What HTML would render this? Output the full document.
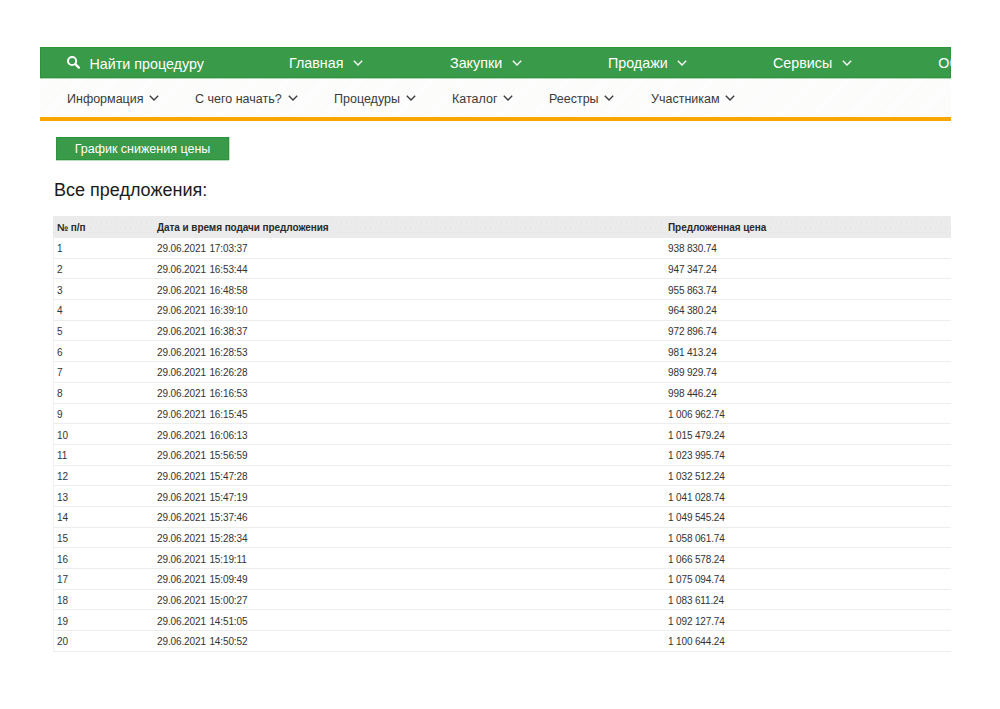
<!DOCTYPE html>
<html><head><meta charset="utf-8"><style>
html,body{margin:0;padding:0;background:#fff;}
body{width:1000px;height:709px;position:relative;overflow:hidden;font-family:"Liberation Sans",sans-serif;}
.topnav{position:absolute;left:40px;top:47px;width:911px;height:31px;background:#399a49;overflow:hidden;z-index:3;box-shadow:inset 0 0 0 1px #2d933b;color:#fff;font-size:14.3px;}
.topnav .it{position:absolute;top:0.8px;line-height:31.5px;white-space:nowrap;}
.topnav .chev{position:absolute;top:13px;}
.subnav{position:absolute;left:40px;top:78px;width:911px;height:39px;overflow:hidden;color:#3a3a3a;font-size:12.5px;
background-color:#fdfdfd;background-image:repeating-linear-gradient(135deg,#fefefe 0,#fefefe 1.6px,#fafaf8 1.6px,#fafaf8 2.75px);}
.subnav .it{position:absolute;top:1.5px;line-height:38.5px;white-space:nowrap;}
.subnav .chev{position:absolute;top:17px;}
.halo{position:absolute;left:40px;top:78px;width:911px;height:1px;background:rgba(57,154,73,0.4);z-index:3;}
.orange{position:absolute;left:40px;top:117px;width:911px;height:4px;background:#ffa500;}
.btn{position:absolute;left:56px;top:137px;width:173px;height:23px;background:#399a49;box-shadow:inset 0 0 0 1px #2d933b,0 1px 0 rgba(57,154,73,0.35),1px 0 0 rgba(57,154,73,0.3);color:#fff;font-size:12.5px;line-height:25.2px;height:23px;text-align:center;overflow:hidden;}
h1{position:absolute;left:54px;top:178.7px;margin:0;font-weight:normal;font-size:18px;line-height:22px;color:#1a1a1a;}
table{position:absolute;left:53px;top:216px;width:898px;border-collapse:collapse;font-size:10px;color:#333;}
th{background:transparent;font-weight:bold;text-align:left;height:22px;box-sizing:border-box;padding:5.5px 0 0 4px;line-height:12px;vertical-align:top;color:#2a2a2a;font-size:10px;letter-spacing:-0.07px;}
td{height:17.7px;padding:2px 0 0 4px;border-bottom:1px solid #ededed;font-size:10px;letter-spacing:-0.12px;word-spacing:0.9px;line-height:11px;vertical-align:middle;}
.hb{background:#ebebeb;padding:1px 2px;margin:0 -2px;} .c1{width:96px;} .c2{width:507px;} td.c3{word-spacing:-0.1px;}
</style></head><body>
<div class="topnav">
<svg style="position:absolute;left:22px;top:7px" width="22" height="18" viewBox="0 0 22 18"><circle cx="10.1" cy="7" r="4.1" fill="none" stroke="#fff" stroke-width="2"/><path d="M13.3 10.2 L16.9 13.6" stroke="#fff" stroke-width="2.4" stroke-linecap="round"/></svg><div class="it" style="left:49.5px;top:1.6px">Найти процедуру</div>
<div class="it" style="left:249px">Главная</div><svg class="chev" style="left:313px" viewBox="0 0 10 6" width="10" height="6"><path d="M0.8 0.8 L5 5 L9.2 0.8" fill="none" stroke="currentColor" stroke-width="1.35"/></svg>
<div class="it" style="left:410px">Закупки</div><svg class="chev" style="left:472px" viewBox="0 0 10 6" width="10" height="6"><path d="M0.8 0.8 L5 5 L9.2 0.8" fill="none" stroke="currentColor" stroke-width="1.35"/></svg>
<div class="it" style="left:568px">Продажи</div><svg class="chev" style="left:637px" viewBox="0 0 10 6" width="10" height="6"><path d="M0.8 0.8 L5 5 L9.2 0.8" fill="none" stroke="currentColor" stroke-width="1.35"/></svg>
<div class="it" style="left:733px">Сервисы</div><svg class="chev" style="left:802px" viewBox="0 0 10 6" width="10" height="6"><path d="M0.8 0.8 L5 5 L9.2 0.8" fill="none" stroke="currentColor" stroke-width="1.35"/></svg>
<div class="it" style="left:898.3px">Об ЭТП</div>
</div>
<div class="subnav">
<div class="it" style="left:27px">Информация</div><svg class="chev" style="left:109px" viewBox="0 0 10 6" width="10" height="6"><path d="M0.8 0.8 L5 5 L9.2 0.8" fill="none" stroke="currentColor" stroke-width="1.35"/></svg>
<div class="it" style="left:155px">С чего начать?</div><svg class="chev" style="left:248px" viewBox="0 0 10 6" width="10" height="6"><path d="M0.8 0.8 L5 5 L9.2 0.8" fill="none" stroke="currentColor" stroke-width="1.35"/></svg>
<div class="it" style="left:294px">Процедуры</div><svg class="chev" style="left:366px" viewBox="0 0 10 6" width="10" height="6"><path d="M0.8 0.8 L5 5 L9.2 0.8" fill="none" stroke="currentColor" stroke-width="1.35"/></svg>
<div class="it" style="left:412px">Каталог</div><svg class="chev" style="left:463px" viewBox="0 0 10 6" width="10" height="6"><path d="M0.8 0.8 L5 5 L9.2 0.8" fill="none" stroke="currentColor" stroke-width="1.35"/></svg>
<div class="it" style="left:509px">Реестры</div><svg class="chev" style="left:563.8px" viewBox="0 0 10 6" width="10" height="6"><path d="M0.8 0.8 L5 5 L9.2 0.8" fill="none" stroke="currentColor" stroke-width="1.35"/></svg>
<div class="it" style="left:611px">Участникам</div><svg class="chev" style="left:685px" viewBox="0 0 10 6" width="10" height="6"><path d="M0.8 0.8 L5 5 L9.2 0.8" fill="none" stroke="currentColor" stroke-width="1.35"/></svg>
</div>
<div class="halo"></div><div class="orange"></div>
<div style="position:absolute;left:53px;top:238px;width:1px;height:414px;background:#f2f2f2;z-index:2"></div>
<div class="btn">График снижения цены</div>
<h1>Все предложения:</h1>
<div style="position:absolute;left:53px;top:216px;width:898px;height:22px;background:#ebebeb;"><svg width="898" height="22" style="position:absolute;left:0;top:0"><defs><pattern id="p1" patternUnits="userSpaceOnUse" x="3" y="0" width="5" height="22"><rect x="0" y="0" width="1" height="22" fill="#dddddd"/></pattern><pattern id="p2" patternUnits="userSpaceOnUse" x="2" y="0" width="5" height="22"><rect x="0" y="0" width="1" height="22" fill="#dddddd"/></pattern><pattern id="p3" patternUnits="userSpaceOnUse" x="0" y="0" width="4" height="22"><rect x="0" y="0" width="1" height="22" fill="#dddddd"/></pattern></defs><rect x="0" y="6" width="898" height="1" fill="url(#p1)"/><rect x="0" y="11" width="898" height="1" fill="url(#p2)"/><rect x="0" y="16" width="898" height="1" fill="url(#p3)"/></svg></div>
<table>
<tr><th class="c1"><span class="hb">№ п/п</span></th><th class="c2"><span class="hb">Дата и время подачи предложения</span></th><th class="c3"><span class="hb">Предложенная цена</span></th></tr>
<tr><td class="c1">1</td><td class="c2">29.06.2021 17:03:37</td><td class="c3">938 830.74</td></tr>
<tr><td class="c1">2</td><td class="c2">29.06.2021 16:53:44</td><td class="c3">947 347.24</td></tr>
<tr><td class="c1">3</td><td class="c2">29.06.2021 16:48:58</td><td class="c3">955 863.74</td></tr>
<tr><td class="c1">4</td><td class="c2">29.06.2021 16:39:10</td><td class="c3">964 380.24</td></tr>
<tr><td class="c1">5</td><td class="c2">29.06.2021 16:38:37</td><td class="c3">972 896.74</td></tr>
<tr><td class="c1">6</td><td class="c2">29.06.2021 16:28:53</td><td class="c3">981 413.24</td></tr>
<tr><td class="c1">7</td><td class="c2">29.06.2021 16:26:28</td><td class="c3">989 929.74</td></tr>
<tr><td class="c1">8</td><td class="c2">29.06.2021 16:16:53</td><td class="c3">998 446.24</td></tr>
<tr><td class="c1">9</td><td class="c2">29.06.2021 16:15:45</td><td class="c3">1 006 962.74</td></tr>
<tr><td class="c1">10</td><td class="c2">29.06.2021 16:06:13</td><td class="c3">1 015 479.24</td></tr>
<tr><td class="c1">11</td><td class="c2">29.06.2021 15:56:59</td><td class="c3">1 023 995.74</td></tr>
<tr><td class="c1">12</td><td class="c2">29.06.2021 15:47:28</td><td class="c3">1 032 512.24</td></tr>
<tr><td class="c1">13</td><td class="c2">29.06.2021 15:47:19</td><td class="c3">1 041 028.74</td></tr>
<tr><td class="c1">14</td><td class="c2">29.06.2021 15:37:46</td><td class="c3">1 049 545.24</td></tr>
<tr><td class="c1">15</td><td class="c2">29.06.2021 15:28:34</td><td class="c3">1 058 061.74</td></tr>
<tr><td class="c1">16</td><td class="c2">29.06.2021 15:19:11</td><td class="c3">1 066 578.24</td></tr>
<tr><td class="c1">17</td><td class="c2">29.06.2021 15:09:49</td><td class="c3">1 075 094.74</td></tr>
<tr><td class="c1">18</td><td class="c2">29.06.2021 15:00:27</td><td class="c3">1 083 611.24</td></tr>
<tr><td class="c1">19</td><td class="c2">29.06.2021 14:51:05</td><td class="c3">1 092 127.74</td></tr>
<tr><td class="c1">20</td><td class="c2">29.06.2021 14:50:52</td><td class="c3">1 100 644.24</td></tr>
</table>
</body></html>
